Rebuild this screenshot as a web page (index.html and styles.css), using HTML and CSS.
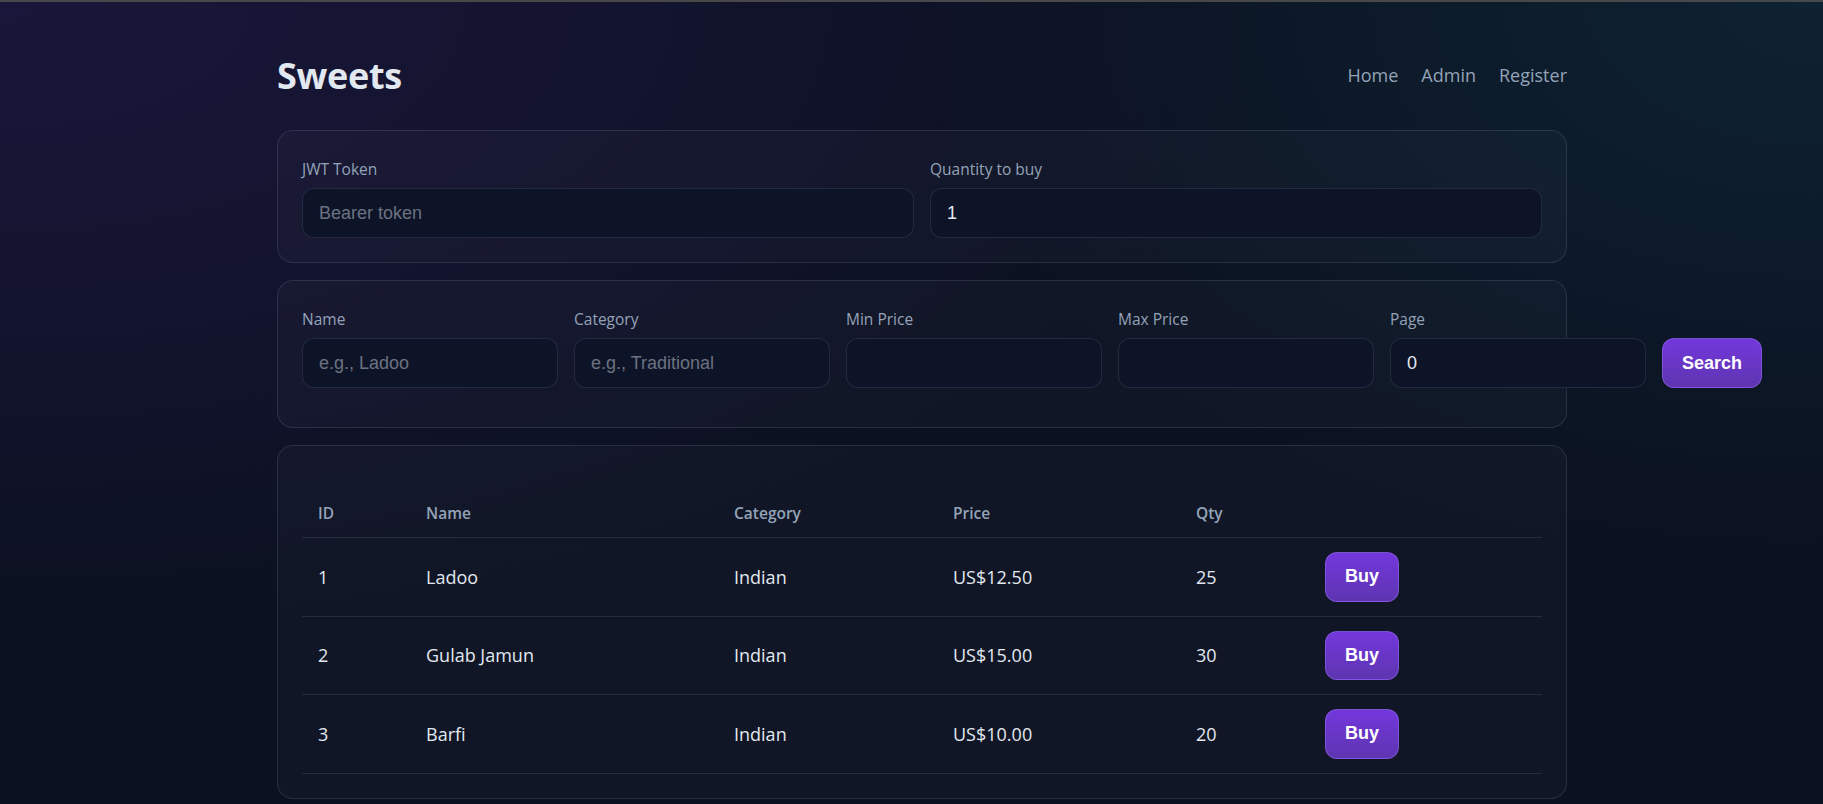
FILE: index.html
```html
<!DOCTYPE html>
<html lang="en">
<head>
<meta charset="utf-8">
<title>Sweets</title>
<link rel="stylesheet" href="styles.css">
</head>
<body>
<div class="page">
  <header class="topbar">
    <h1 class="brand">Sweets</h1>
    <nav class="nav">
      <a class="nav-link" href="#">Home</a>
      <a class="nav-link" href="#">Admin</a>
      <a class="nav-link" href="#">Register</a>
    </nav>
  </header>

  <section class="card auth-card">
    <div class="field">
      <label class="label">JWT Token</label>
      <input class="input" type="text" placeholder="Bearer token">
    </div>
    <div class="field">
      <label class="label">Quantity to buy</label>
      <input class="input" type="text" value="1">
    </div>
  </section>

  <section class="card filter-card">
    <div class="filter-row">
      <div class="field filter-field">
        <label class="label">Name</label>
        <input class="input" type="text" placeholder="e.g., Ladoo">
      </div>
      <div class="field filter-field">
        <label class="label">Category</label>
        <input class="input" type="text" placeholder="e.g., Traditional">
      </div>
      <div class="field filter-field">
        <label class="label">Min Price</label>
        <input class="input" type="text">
      </div>
      <div class="field filter-field">
        <label class="label">Max Price</label>
        <input class="input" type="text">
      </div>
      <div class="field filter-field">
        <label class="label">Page</label>
        <input class="input" type="text" value="0">
      </div>
      <button class="btn btn-search">Search</button>
    </div>
  </section>

  <section class="card table-card">
    <table class="table">
      <thead>
        <tr>
          <th class="col-id">ID</th>
          <th class="col-name">Name</th>
          <th class="col-cat">Category</th>
          <th class="col-price">Price</th>
          <th class="col-qty">Qty</th>
          <th class="col-act"></th>
        </tr>
      </thead>
      <tbody>
        <tr>
          <td>1</td><td>Ladoo</td><td>Indian</td><td>US$12.50</td><td>25</td>
          <td><button class="btn btn-buy">Buy</button></td>
        </tr>
        <tr>
          <td>2</td><td>Gulab Jamun</td><td>Indian</td><td>US$15.00</td><td>30</td>
          <td><button class="btn btn-buy">Buy</button></td>
        </tr>
        <tr>
          <td>3</td><td>Barfi</td><td>Indian</td><td>US$10.00</td><td>20</td>
          <td><button class="btn btn-buy">Buy</button></td>
        </tr>
      </tbody>
    </table>
  </section>
</div>
</body>
</html>
```

FILE: styles.css
```css
* { box-sizing: border-box; }

html, body { height: 100%; }

body {
  margin: 0;
  border-top: 2px solid #484848;
  font-family: "Open Sans", "Noto Sans", sans-serif;
  color: #e2e8f0;
  background-color: #0b1120;
  background-image:
    radial-gradient(ellipse 70% 80% at 0% 0%, rgba(27, 22, 60, 0.95) 0%, rgba(27, 22, 60, 0) 100%),
    radial-gradient(ellipse 50% 70% at 100% 0%, rgba(14, 36, 52, 0.9) 0%, rgba(14, 36, 52, 0) 100%);
  background-repeat: no-repeat;
  overflow: hidden;
  padding-left: 21px;
}

.page {
  width: 1290px;
  margin: 0 auto;
  padding-top: 50px;
}

.topbar {
  display: flex;
  justify-content: space-between;
  align-items: center;
  height: 46px;
  margin-bottom: 32px;
}

.brand {
  margin: 0;
  font-size: 36px;
  font-weight: 700;
  color: #e2e8f0;
  letter-spacing: -0.3px;
}

.nav {
  display: flex;
  gap: 23px;
}

.nav-link {
  color: #94a3b8;
  text-decoration: none;
  font-size: 18px;
}

.card {
  border: 1px solid rgba(148, 163, 184, 0.18);
  border-radius: 16px;
  background: rgba(255, 255, 255, 0.025);
  padding: 24px;
  margin-bottom: 17px;
}

.auth-card {
  display: grid;
  grid-template-columns: 1fr 1fr;
  gap: 16px;
}

.field {
  display: flex;
  flex-direction: column;
}

.label {
  font-size: 15.5px;
  line-height: 24px;
  margin-top: 2px;
  margin-bottom: 7px;
  color: #94a3b8;
}

.input {
  height: 50px;
  width: 100%;
  border: 1px solid rgba(148, 163, 184, 0.16);
  border-radius: 12px;
  background: #0e1428;
  color: #e2e8f0;
  font-family: "Liberation Sans", Arial, sans-serif;
  font-size: 18px;
  padding: 0 16px;
  outline: none;
}

.input::placeholder {
  color: #6b7280;
}

.filter-row {
  display: flex;
  gap: 16px;
  align-items: flex-end;
}

.filter-field {
  flex: 0 0 256px;
}

.filter-card {
  padding-bottom: 39px;
}

.btn {
  border: 1px solid rgba(167, 139, 250, 0.35);
  border-radius: 12px;
  background: linear-gradient(180deg, #7337dc 0%, #5e35b1 100%);
  color: #ffffff;
  font-family: "Liberation Sans", Arial, sans-serif;
  font-weight: 700;
  font-size: 18px;
  cursor: pointer;
}

.btn-search {
  flex: 0 0 100px;
  height: 50px;
}

.table-card {
  padding-top: 43px;
}

.table {
  width: 100%;
  border-collapse: collapse;
}

.table th {
  text-align: left;
  font-size: 15.5px;
  font-weight: 600;
  color: #94a3b8;
  padding: 14px 16px;
  line-height: 20px;
  border-bottom: 1px solid rgba(148, 163, 184, 0.16);
}

.table td {
  font-size: 18px;
  padding: 14px 16px;
  border-bottom: 1px solid rgba(148, 163, 184, 0.16);
  color: #e2e8f0;
}

.col-id { width: 108px; }
.col-name { width: 308px; }
.col-cat { width: 219px; }
.col-price { width: 243px; }
.col-qty { width: 129px; }
.col-act { width: 233px; }

.btn-buy {
  height: 49.5px;
  padding: 0 19px;
  display: block;
}
```
